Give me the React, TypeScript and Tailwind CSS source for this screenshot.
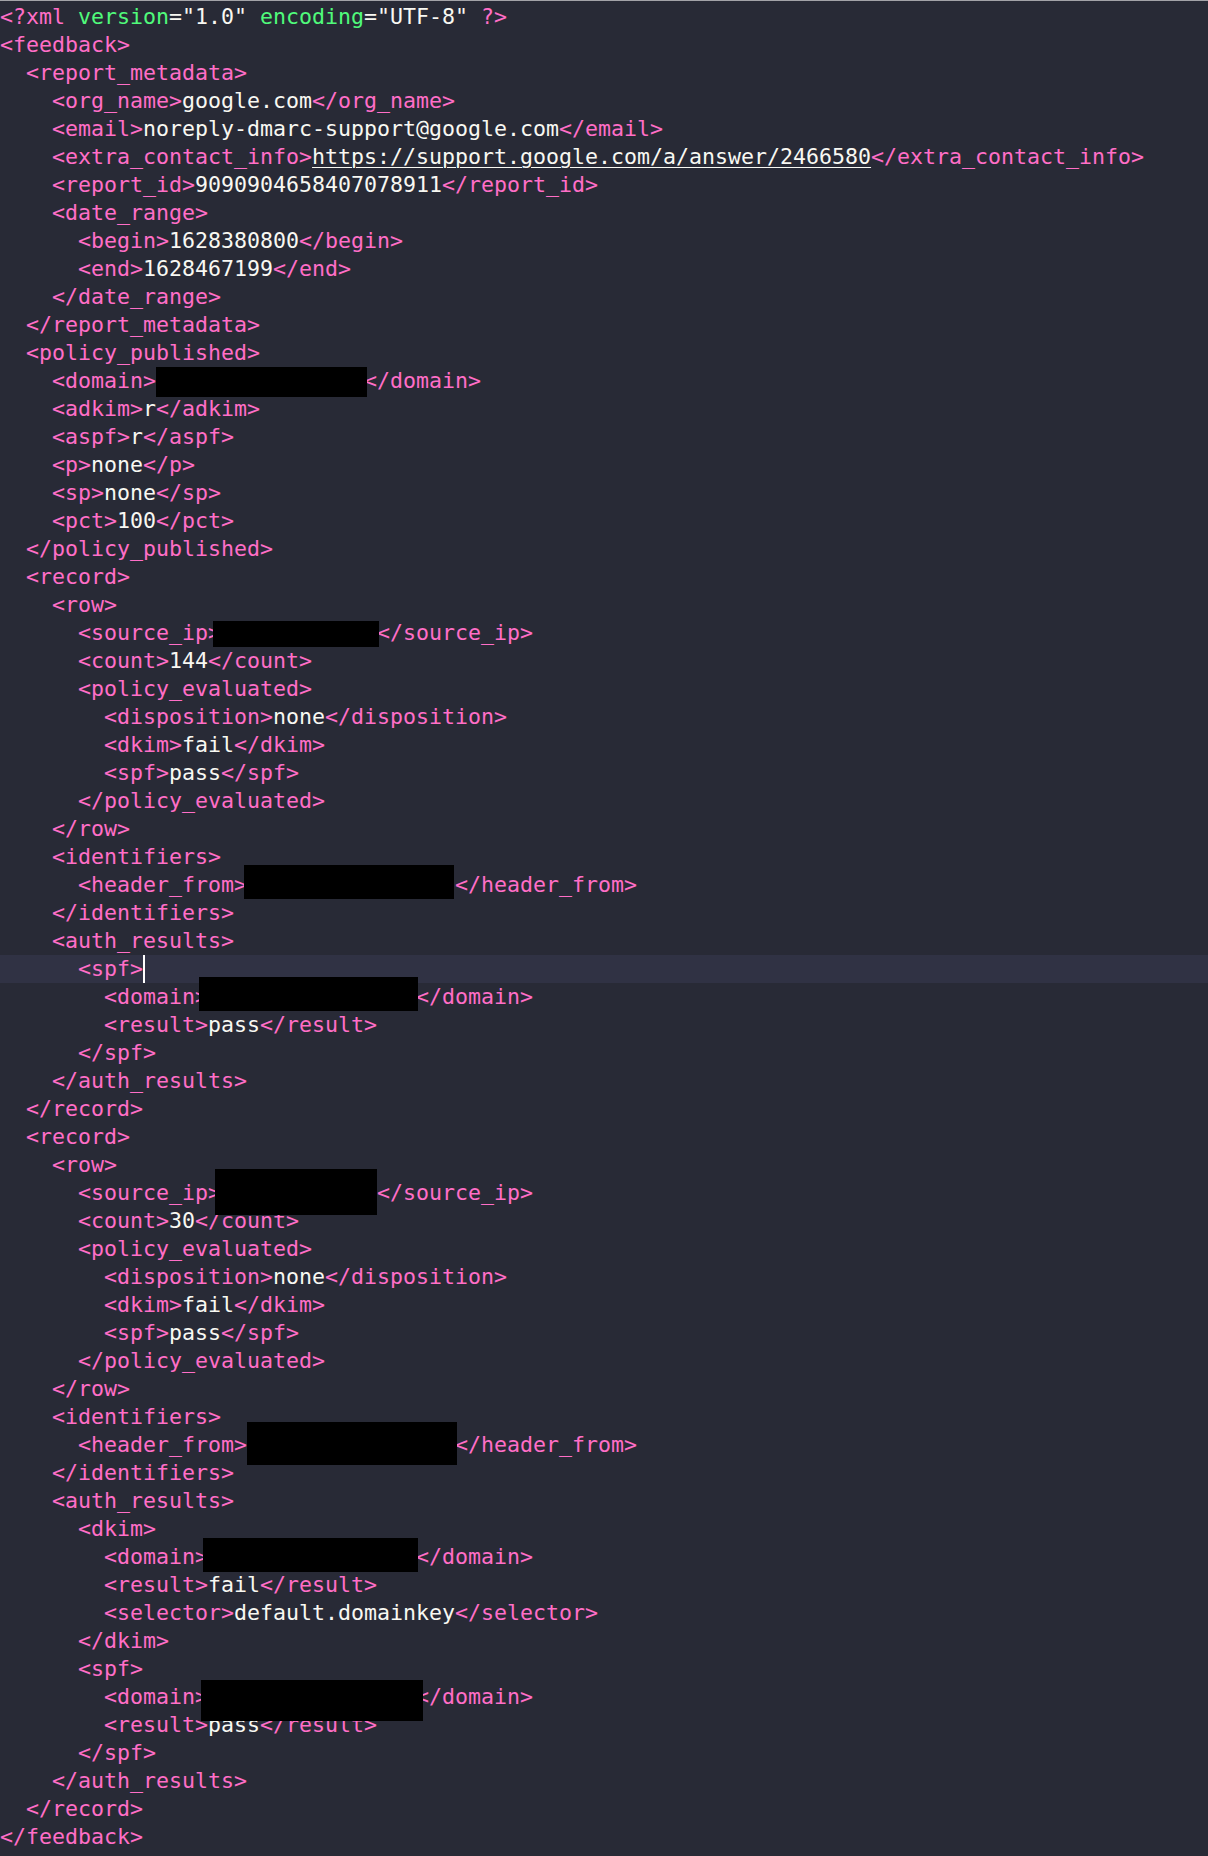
import React from "react";

type Tok = [string, string];

const T = (s: string): Tok => ["t", s];
const V = (s: string): Tok => ["v", s];
const A = (s: string): Tok => ["a", s];
const U = (s: string): Tok => ["u", s];
const S = (n: number): Tok => ["v", " ".repeat(n)];

const ind = (n: number): Tok => ["v", " ".repeat(n * 2)];

const el = (lvl: number, name: string, val: Tok): Tok[] => [
  ind(lvl),
  T(`<${name}>`),
  val,
  T(`</${name}>`),
];
const open = (lvl: number, name: string): Tok[] => [ind(lvl), T(`<${name}>`)];
const close = (lvl: number, name: string): Tok[] => [ind(lvl), T(`</${name}>`)];

const lines: Tok[][] = [
  [T("<?xml "), A("version"), V('="1.0" '), A("encoding"), V('="UTF-8" '), T("?>")],
  open(0, "feedback"),
  open(1, "report_metadata"),
  el(2, "org_name", V("google.com")),
  el(2, "email", V("noreply-dmarc-support@google.com")),
  el(2, "extra_contact_info", U("https://support.google.com/a/answer/2466580")),
  el(2, "report_id", V("9090904658407078911")),
  open(2, "date_range"),
  el(3, "begin", V("1628380800")),
  el(3, "end", V("1628467199")),
  close(2, "date_range"),
  close(1, "report_metadata"),
  open(1, "policy_published"),
  el(2, "domain", S(16)),
  el(2, "adkim", V("r")),
  el(2, "aspf", V("r")),
  el(2, "p", V("none")),
  el(2, "sp", V("none")),
  el(2, "pct", V("100")),
  close(1, "policy_published"),
  open(1, "record"),
  open(2, "row"),
  el(3, "source_ip", S(12)),
  el(3, "count", V("144")),
  open(3, "policy_evaluated"),
  el(4, "disposition", V("none")),
  el(4, "dkim", V("fail")),
  el(4, "spf", V("pass")),
  close(3, "policy_evaluated"),
  close(2, "row"),
  open(2, "identifiers"),
  el(3, "header_from", S(16)),
  close(2, "identifiers"),
  open(2, "auth_results"),
  open(3, "spf"),
  el(4, "domain", S(16)),
  el(4, "result", V("pass")),
  close(3, "spf"),
  close(2, "auth_results"),
  close(1, "record"),
  open(1, "record"),
  open(2, "row"),
  el(3, "source_ip", S(12)),
  el(3, "count", V("30")),
  open(3, "policy_evaluated"),
  el(4, "disposition", V("none")),
  el(4, "dkim", V("fail")),
  el(4, "spf", V("pass")),
  close(3, "policy_evaluated"),
  close(2, "row"),
  open(2, "identifiers"),
  el(3, "header_from", S(16)),
  close(2, "identifiers"),
  open(2, "auth_results"),
  open(3, "dkim"),
  el(4, "domain", S(16)),
  el(4, "result", V("fail")),
  el(4, "selector", V("default.domainkey")),
  close(3, "dkim"),
  open(3, "spf"),
  el(4, "domain", S(16)),
  el(4, "result", V("pass")),
  close(3, "spf"),
  close(2, "auth_results"),
  close(1, "record"),
  close(0, "feedback"),
];

const boxes = [
  { l: 156, t: 367, w: 211, h: 30 },
  { l: 213, t: 621, w: 166, h: 26 },
  { l: 244, t: 865, w: 210, h: 34 },
  { l: 199, t: 977, w: 219, h: 34 },
  { l: 215, t: 1169, w: 162, h: 46 },
  { l: 247, t: 1422, w: 210, h: 43 },
  { l: 203, t: 1538, w: 215, h: 34 },
  { l: 201, t: 1680, w: 222, h: 41 },
];

function Tokn({ tok }: { tok: Tok }) {
  const [k, s] = tok;
  if (k === "t") return <span className="text-[#ff6ec7]">{s}</span>;
  if (k === "a") return <span className="text-[#50fa7b]">{s}</span>;
  if (k === "u")
    return (
      <span className="text-[#f8f8f2] underline decoration-1 underline-offset-[3px]">{s}</span>
    );
  return <span className="text-[#f8f8f2]">{s}</span>;
}

export default function App() {
  return (
    <div className="min-h-[1856px] w-full bg-[#282a36] border-t border-[#a3a3a8]">
      <div className="relative pt-[2px] font-['DejaVu_Sans_Mono',monospace] text-[21.6px] leading-[28px] whitespace-pre">
        {lines.map((ln, i) => (
          <div
            key={i}
            className={i === 34 ? "h-[28px] bg-[#303244]" : "h-[28px]"}
          >
            {ln.map((tok, j) => (
              <Tokn key={j} tok={tok} />
            ))}
            {i === 34 && (
              <span className="inline-block w-[1.5px] h-[28px] bg-white align-top" />
            )}
          </div>
        ))}
        {boxes.map((b, i) => (
          <div
            key={i}
            className="absolute bg-black"
            style={{ left: b.l, top: b.t - 1, width: b.w, height: b.h }}
          />
        ))}
      </div>
    </div>
  );
}
